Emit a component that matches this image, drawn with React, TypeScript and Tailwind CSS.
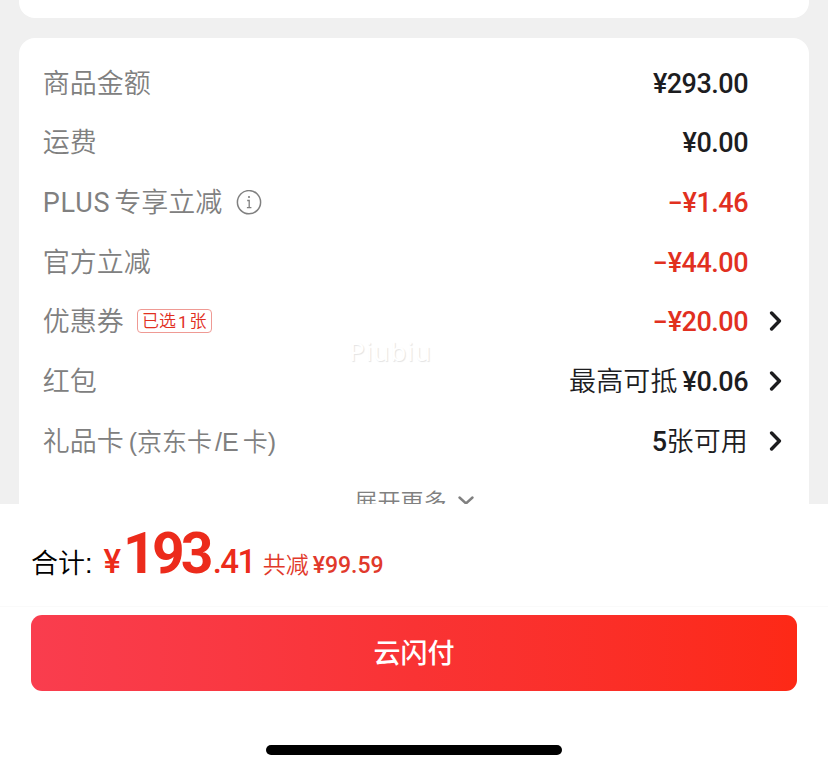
import React from "react";

interface RowProps {
  label: React.ReactNode;
  value: React.ReactNode;
  red?: boolean;
  arrow?: boolean;
}

const ArrowRight = () => (
  <svg className="h-5 w-[13px]" viewBox="0 0 13 20" fill="none" stroke="#1d1d1f" strokeWidth="3.4" strokeLinecap="round" strokeLinejoin="round">
    <path d="M2.6 2 L10.4 10 L2.6 18" />
  </svg>
);

const InfoIcon = () => (
  <svg className="ml-[14px] h-[26px] w-[26px]" viewBox="0 0 26 26" fill="none" stroke="#808080" strokeWidth="1.5">
    <circle cx="13" cy="12.2" r="11.6" />
    <path d="M11.2 10.5 H13.2 V17.1 M10.9 17.6 H15.4" strokeWidth="1.3" />
    <circle cx="13" cy="7" r="1.1" fill="#808080" stroke="none" />
  </svg>
);

const Row: React.FC<RowProps> = ({ label, value, red, arrow }) => (
  <div className="flex h-[59.67px] items-center">
    <div className="-ml-[0.3px] flex items-center pt-[2px] text-[27px] leading-[40px] text-[#808080]">{label}</div>
    <div className={`ml-auto flex items-center pt-[2px] ${red ? "text-[#e1301f]" : "text-[#1d1d1f]"}`}>{value}</div>
    <div className="ml-[21px] flex w-[17px] items-center">{arrow && <ArrowRight />}</div>
  </div>
);

const Price = ({ children, minus }: { children: string; minus?: boolean }) => (
  <span className="font-[Roboto,sans-serif] text-[27px] leading-[40px] font-medium tracking-[-0.5px]">
    {minus && <span className="relative -top-[1px] mr-[2px] inline-block w-[13px] origin-left scale-x-160">-</span>}
    {children}
  </span>
);

export default function App() {
  return (
    <div className="flex h-[770px] w-[828px] flex-col overflow-hidden bg-white font-['Liberation_Sans','Noto_Sans_CJK_SC',sans-serif] font-[350]">
      <div className="h-[504px] overflow-hidden bg-[#f0f0f0] pr-[19px] pl-[19px]">
        <div className="h-[18px] rounded-b-[16px] bg-white" />
        <div className="relative mt-5 h-[500px] rounded-t-[16px] bg-white pt-[15px] pr-[23px] pl-6">
          <Row label="商品金额" value={<Price>¥293.00</Price>} />
          <Row label="运费" value={<Price>¥0.00</Price>} />
          <Row
            label={
              <>
                <span className="font-[Roboto,sans-serif] font-normal tracking-[0.8px]">PLUS</span>
                <span className="ml-[4px]">专享立减</span>
                <InfoIcon />
              </>
            }
            value={<Price minus>¥1.46</Price>}
            red
          />
          <Row label="官方立减" value={<Price minus>¥44.00</Price>} red />
          <Row
            label={
              <>
                <span>优惠券</span>
                <span className="-mt-[2px] ml-[13px] flex h-6 w-[75px] items-center justify-center rounded-[4px] border border-[#ef9a94] pt-[1px] text-[17px] leading-[22px] text-[#e1301f]">
                  已选<span className="mx-[2px] font-[Roboto,sans-serif] font-normal">1</span>张
                </span>
              </>
            }
            value={<Price minus>¥20.00</Price>}
            red
            arrow
          />
          <Row
            label="红包"
            value={
              <>
                <span className="mr-[5px] text-[27px] leading-[40px] tracking-[0.15px]">最高可抵</span>
                <Price>¥0.06</Price>
              </>
            }
            arrow
          />
          <Row
            label={
              <>
                礼品卡<span className="ml-[5px] text-[25px]">(京东卡</span>
                <span className="ml-[3px] text-[25px]">/E</span>
                <span className="ml-[4px] text-[25px]">卡)</span>
              </>
            }
            value={
              <>
                <Price>5</Price>
                <span className="text-[27px] leading-[40px] tracking-[0.15px]">张可用</span>
              </>
            }
            arrow
          />
          <div className="mt-[15px] flex items-start justify-center pr-[1px] text-[23px] leading-[32px] text-[#808080]">
            展开更多
            <svg className="mt-[10px] ml-[11px] h-[10px] w-4" viewBox="0 0 16 10" fill="none" stroke="#808080" strokeWidth="2.4" strokeLinecap="round" strokeLinejoin="round">
              <path d="M1.5 1.5 L8 7.5 L14.5 1.5" />
            </svg>
          </div>
          {/* watermark */}
          <span className="absolute top-[296px] left-[330px] font-['Noto_Sans',sans-serif] text-[26px] leading-[34px] font-normal tracking-[0.9px] text-white [text-shadow:1px_1px_1px_#e4e4e4]">Piubiu</span>
        </div>
      </div>

      <div className="flex h-[103px] items-baseline border-b border-[#fafafa] pl-[31px] whitespace-nowrap">
        <span className="text-[27px] leading-[121px] text-black">合计:</span>
        <span className="ml-[11px] flex items-baseline font-[Roboto,sans-serif] leading-none text-[#ec2b1b]">
          <span className="text-[33px] font-medium">¥</span>
          <span className="ml-[2px] text-[57px] font-bold tracking-[-3.8px]">193</span>
          <span className="ml-[3px] text-[33px] font-medium tracking-[-1.6px]">.41</span>
        </span>
        <span className="ml-[8px] text-[23px] leading-none text-[#e1392b]">共减</span>
        <span className="ml-[4px] font-[Roboto,sans-serif] text-[23px] leading-none font-medium text-[#e1392b]">¥99.59</span>
      </div>

      <button className="mt-[8px] ml-[31px] flex h-[76px] w-[766px] items-center justify-center rounded-[11px] bg-linear-to-r from-[#f93d4e] via-[#f93334] to-[#fd2916] pt-[3px] text-[27px] font-medium text-white">
        云闪付
      </button>
      <div className="mt-[54px] ml-[266px] h-[10px] w-[296px] rounded-full bg-black" />
    </div>
  );
}
